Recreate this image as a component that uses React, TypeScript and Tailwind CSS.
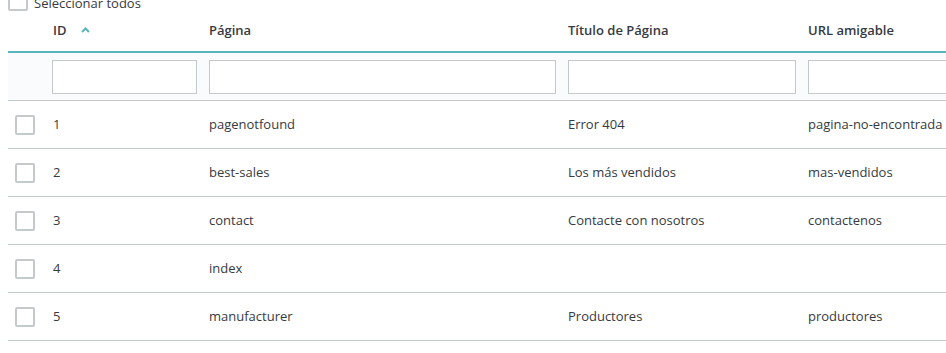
import React from "react";

type Row = { id: number; page: string; title: string; url: string };

const rows: Row[] = [
  { id: 1, page: "pagenotfound", title: "Error 404", url: "pagina-no-encontrada" },
  { id: 2, page: "best-sales", title: "Los más vendidos", url: "mas-vendidos" },
  { id: 3, page: "contact", title: "Contacte con nosotros", url: "contactenos" },
  { id: 4, page: "index", title: "", url: "" },
  { id: 5, page: "manufacturer", title: "Productores", url: "productores" },
];

const cols = "grid grid-cols-[44px_157px_359px_240px_240px]";

function Box() {
  return <span className="block h-5 w-5 rounded-[2px] border-2 border-[#c4c9cc] bg-white" />;
}

function FilterInput() {
  return <input type="text" className="h-[34px] w-[calc(100%-12px)] border border-[#c4c9cc] bg-white" />;
}

export default function App() {
  return (
    <div
      className="h-[353px] w-[946px] overflow-hidden bg-white text-[13px] text-[#363a41]"
      style={{ fontFamily: '"Open Sans", "Noto Sans", sans-serif' }}
    >
      <div className="-mt-[9px] flex h-5 items-center gap-[6px] pl-2">
        <Box />
        <span className="mt-[3px] leading-5">Seleccionar todos</span>
      </div>

      <div className="ml-2 w-[1040px]">
        <div className={`${cols} h-[42px] items-center border-b-2 border-[#5ab4bc] font-semibold`}>
          <div />
          <div className="flex items-center gap-[14px] pl-px">
            ID
            <svg width="9" height="6" viewBox="0 0 9 6" className="mt-[-2px]">
              <polyline points="1,5 4.5,1.5 8,5" fill="none" stroke="#5ab4bc" strokeWidth="2" />
            </svg>
          </div>
          <div>Página</div>
          <div>Título de Página</div>
          <div>URL amigable</div>
        </div>

        <div className={`${cols} h-[48px] items-center border-b border-[#c4c9cc] bg-[#fafbfc]`}>
          <div />
          <FilterInput />
          <FilterInput />
          <FilterInput />
          <FilterInput />
        </div>

        {rows.map((r) => (
          <div key={r.id} className={`${cols} h-[48px] items-center border-b border-[#c4c9cc]`}>
            <div className="pl-[7px]">
              <Box />
            </div>
            <div className="pl-px">{r.id}</div>
            <div>{r.page}</div>
            <div>{r.title}</div>
            <div>{r.url}</div>
          </div>
        ))}
      </div>
    </div>
  );
}
